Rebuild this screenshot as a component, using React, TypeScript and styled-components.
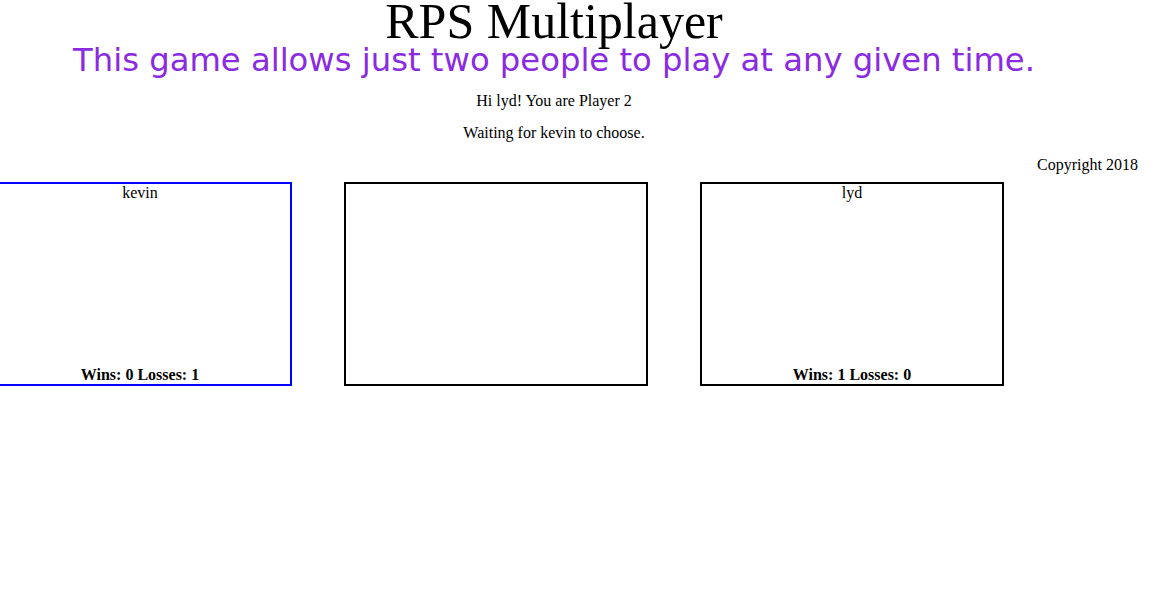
import React from "react";
import styled, { createGlobalStyle } from "styled-components";

const GlobalStyle = createGlobalStyle`
  html, body {
    margin: 0;
    padding: 0;
    background: #ffffff;
  }
  body {
    font-family: "Liberation Serif", "Times New Roman", serif;
    font-size: 16px;
    color: #000000;
    overflow: hidden;
  }
`;

const Page = styled.div`
  width: 1156px;
  height: 592px;
`;

const Header = styled.header`
  width: 1108px;
  text-align: center;
`;

const Title = styled.h1`
  margin: 0;
  font-family: "Liberation Serif", "Times New Roman", serif;
  font-weight: normal;
  font-size: 50px;
  line-height: 42px;
`;

const Subtitle = styled.h2`
  margin: 0;
  font-family: "DejaVu Sans", Verdana, sans-serif;
  font-weight: normal;
  font-size: 32.25px;
  line-height: 37px;
  color: #8a2be2;
`;

const Line = styled.p`
  margin: 13px 0 0;
  line-height: 18.4px;
  & + & {
    margin-top: 14px;
  }
`;

const Copyright = styled.div`
  margin-top: 13px;
  padding-right: 18px;
  text-align: right;
  line-height: 18.4px;
`;

const Row = styled.div`
  display: flex;
  gap: 52px;
  margin-top: 8px;
  margin-left: -12px;
`;

const Box = styled.div<{ $active?: boolean }>`
  width: 300px;
  height: 200px;
  border: 2px solid ${(p) => (p.$active ? "#0000ff" : "#000000")};
  display: flex;
  flex-direction: column;
  justify-content: space-between;
  text-align: center;
  flex-shrink: 0;
`;

const Name = styled.div`
  line-height: 16px;
  padding-top: 1px;
`;

const Score = styled.div`
  font-weight: bold;
  line-height: 18.4px;
`;

const players = [
  { name: "kevin", wins: 0, losses: 1, active: true },
  null,
  { name: "lyd", wins: 1, losses: 0, active: false },
];

export default function App() {
  return (
    <Page>
      <GlobalStyle />
      <Header>
        <Title>RPS Multiplayer</Title>
        <Subtitle>This game allows just two people to play at any given time.</Subtitle>
        <Line>Hi lyd! You are Player 2</Line>
        <Line>Waiting for kevin to choose.</Line>
      </Header>
      <Copyright>Copyright 2018</Copyright>
      <Row>
        {players.map((p, i) =>
          p ? (
            <Box key={i} $active={p.active}>
              <Name>{p.name}</Name>
              <Score>
                Wins: {p.wins} Losses: {p.losses}
              </Score>
            </Box>
          ) : (
            <Box key={i} />
          )
        )}
      </Row>
    </Page>
  );
}
